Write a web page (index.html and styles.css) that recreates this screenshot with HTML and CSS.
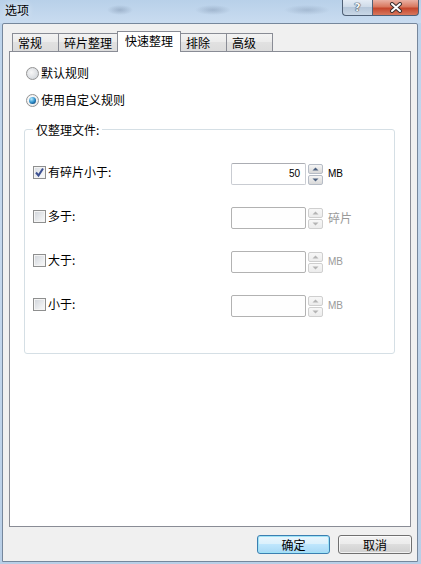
FILE: index.html
```html
<!DOCTYPE html>
<html lang="zh-CN">
<head>
<meta charset="utf-8">
<title>选项</title>
<link rel="stylesheet" href="styles.css">
</head>
<body>
<div class="window">
  <div class="titlebar">
    <span class="title">选项</span>
    <div class="caption-btns">
      <div class="cap help"><span>?</span></div>
      <div class="cap close">
        <svg width="14" height="11" viewBox="0 0 14 11"><path d="M3 2 L11 9 M11 2 L3 9" stroke="#3b3030" stroke-width="4" stroke-linecap="round" fill="none"/><path d="M3 2 L11 9 M11 2 L3 9" stroke="#ffffff" stroke-width="2" stroke-linecap="round" fill="none"/></svg>
      </div>
    </div>
  </div>
  <div class="client">
    <div class="tabs">
      <div class="tab">常规</div>
      <div class="tab">碎片整理</div>
      <div class="tab active">快速整理</div>
      <div class="tab">排除</div>
      <div class="tab">高级</div>
    </div>
    <div class="pane">
      <div class="opt"><span class="radio"></span><span>默认规则</span></div>
      <div class="opt"><span class="radio checked"><span class="dot"></span></span><span>使用自定义规则</span></div>
      <fieldset class="group">
        <legend>仅整理文件:</legend>
        <div class="rule">
          <div class="rule-label"><span class="check checked"><svg width="11" height="11" viewBox="0 0 11 11"><path d="M2 5.5 L4.5 8.5 L9 1.5" stroke="#3d5191" stroke-width="2" fill="none"/></svg></span><span>有碎片小于:</span></div>
          <div class="num">50</div>
          <div class="spin">
            <span class="sb"><svg width="7" height="4" viewBox="0 0 7 4"><path d="M0.5 3.5 L3.5 0.5 L6.5 3.5 Z" fill="#4c607f"/></svg></span>
            <span class="sb"><svg width="7" height="4" viewBox="0 0 7 4"><path d="M0.5 0.5 L3.5 3.5 L6.5 0.5 Z" fill="#4c607f"/></svg></span>
          </div>
          <span class="unit">MB</span>
        </div>
        <div class="rule">
          <div class="rule-label"><span class="check"></span><span>多于:</span></div>
          <div class="num disabled"></div>
          <div class="spin disabled">
            <span class="sb"><svg width="7" height="4" viewBox="0 0 7 4"><path d="M0.5 3.5 L3.5 0.5 L6.5 3.5 Z" fill="#b4b4b4"/></svg></span>
            <span class="sb"><svg width="7" height="4" viewBox="0 0 7 4"><path d="M0.5 0.5 L3.5 3.5 L6.5 0.5 Z" fill="#b4b4b4"/></svg></span>
          </div>
          <span class="unit cjk disabled">碎片</span>
        </div>
        <div class="rule">
          <div class="rule-label"><span class="check"></span><span>大于:</span></div>
          <div class="num disabled"></div>
          <div class="spin disabled">
            <span class="sb"><svg width="7" height="4" viewBox="0 0 7 4"><path d="M0.5 3.5 L3.5 0.5 L6.5 3.5 Z" fill="#b4b4b4"/></svg></span>
            <span class="sb"><svg width="7" height="4" viewBox="0 0 7 4"><path d="M0.5 0.5 L3.5 3.5 L6.5 0.5 Z" fill="#b4b4b4"/></svg></span>
          </div>
          <span class="unit disabled">MB</span>
        </div>
        <div class="rule">
          <div class="rule-label"><span class="check"></span><span>小于:</span></div>
          <div class="num disabled"></div>
          <div class="spin disabled">
            <span class="sb"><svg width="7" height="4" viewBox="0 0 7 4"><path d="M0.5 3.5 L3.5 0.5 L6.5 3.5 Z" fill="#b4b4b4"/></svg></span>
            <span class="sb"><svg width="7" height="4" viewBox="0 0 7 4"><path d="M0.5 0.5 L3.5 3.5 L6.5 0.5 Z" fill="#b4b4b4"/></svg></span>
          </div>
          <span class="unit disabled">MB</span>
        </div>
      </fieldset>
    </div>
    <div class="buttons">
      <button class="btn default">确定</button>
      <button class="btn">取消</button>
    </div>
  </div>
</div>
</body>
</html>
```
FILE: styles.css
```css
html, body {
  margin: 0;
  padding: 0;
}
body {
  width: 421px;
  height: 564px;
  overflow: hidden;
  background: linear-gradient(#bcd3eb, #c6d9ee 40%, #b9cfe7);
  font-family: "Noto Sans CJK SC", "Noto Sans", sans-serif;
  font-size: 12px;
  color: #000;
}
.window {
  height: 564px;
  display: flex;
  flex-direction: column;
}
.titlebar {
  height: 23px;
  flex: none;
  display: flex;
  align-items: flex-start;
  padding-left: 5px;
  background:
    radial-gradient(ellipse 13px 5px at 120px 10px, rgba(70, 90, 120, 0.28), rgba(70, 90, 120, 0)),
    radial-gradient(ellipse 18px 5px at 213px 10px, rgba(70, 90, 120, 0.25), rgba(70, 90, 120, 0)),
    radial-gradient(ellipse 23px 5px at 307px 10px, rgba(70, 90, 120, 0.22), rgba(70, 90, 120, 0)),
    linear-gradient(#b8d0e9, #c9dcf0);
}
.title {
  line-height: 20px;
  text-shadow: 0 0 6px rgba(255, 255, 255, 0.9);
}
.caption-btns {
  margin-left: auto;
  margin-right: 2px;
  display: flex;
}
.cap {
  height: 16px;
  box-sizing: border-box;
  border: 1px solid #4f6076;
  border-top: none;
  display: flex;
  align-items: center;
  justify-content: center;
}
.help {
  width: 30px;
  border-right: none;
  border-radius: 0 0 0 4px;
  background: linear-gradient(#e4ecf5, #ccd9e7 50%, #b6c7da 50%, #c9d7e6);
}
.help span {
  font-family: "DejaVu Sans", sans-serif;
  font-weight: bold;
  font-size: 11px;
  line-height: 14px;
  color: #f4f6f9;
  text-shadow: 0 0 1px #3a4252, 0 0 1px #3a4252, 0 0 1px #3a4252;
}
.close {
  width: 47px;
  border-radius: 0 0 4px 0;
  background: linear-gradient(#eab1a4, #d9785f 45%, #c5462c 55%, #d7775d);
}
.client {
  flex: 1;
  display: flex;
  flex-direction: column;
  margin: 0 3px 2px 2px;
  border: 1px solid #76879c;
  border-radius: 2px 2px 0 0;
  background: #f0f0f0;
  padding: 7px 6px 7px 6px;
}
.tabs {
  height: 20px;
  flex: none;
  display: flex;
  align-items: flex-end;
  padding-left: 3px;
}
.tab {
  height: 18px;
  min-width: 47px;
  box-sizing: border-box;
  border: 1px solid #898c95;
  border-bottom: none;
  margin-right: -1px;
  padding: 0 5px;
  line-height: 17px;
  background: linear-gradient(#f3f3f3, #ebebeb 50%, #e1e1e1 50%, #dcdcdc);
}
.tab.active {
  height: 21px;
  margin-bottom: -1px;
  padding: 0 7px;
  line-height: 18px;
  background: #fff;
  position: relative;
  z-index: 1;
}
.pane {
  flex: 1;
  border: 1px solid #898c95;
  background: #fff;
  padding: 13px 0 0 16px;
  display: flex;
  flex-direction: column;
  align-items: flex-start;
}
.opt {
  display: flex;
  align-items: center;
  height: 16px;
  line-height: 16px;
}
.opt + .opt {
  margin-top: 11px;
}
.radio {
  width: 13px;
  height: 13px;
  box-sizing: border-box;
  border: 1px solid #939393;
  border-radius: 50%;
  margin-right: 2px;
  background: radial-gradient(circle at 40% 40%, #f7f7f7, #dcdfe3 60%, #c9ced4);
  display: flex;
  align-items: center;
  justify-content: center;
}
.radio.checked {
  background: radial-gradient(circle at 40% 40%, #ffffff, #f0f0f0 60%, #d9dde1);
}
.dot {
  width: 7px;
  height: 7px;
  border-radius: 50%;
  background: radial-gradient(circle at 35% 30%, #b9ecff, #3a9ad3 45%, #145b93 75%, #0c3f6e);
}
.group {
  margin: 12px 0 0 -2px;
  width: 371px;
  box-sizing: border-box;
  border: 1px solid #d5dfe5;
  border-radius: 3px;
  padding: 25px 0 36px 8px;
  min-inline-size: 0;
}
.group legend {
  padding: 2px 3px 0 3px;
  line-height: 16px;
}
.rule {
  display: flex;
  align-items: flex-start;
  height: 22px;
}
.rule + .rule {
  margin-top: 22px;
}
.rule-label {
  width: 198px;
  height: 16px;
  margin-top: 1px;
  line-height: 16px;
  display: flex;
  align-items: center;
}
.check {
  width: 13px;
  height: 13px;
  box-sizing: border-box;
  border: 1px solid #8e8f8f;
  margin-right: 2px;
  box-shadow: inset 0 0 0 1px #f4f4f4;
  background: linear-gradient(135deg, #cfd3d9, #eef0f2 70%, #f8f8f8);
  display: flex;
  align-items: center;
  justify-content: center;
}
.check.checked {
  background: linear-gradient(135deg, #d8dce2, #f2f3f5 70%, #fbfbfb);
}
.num {
  width: 75px;
  height: 22px;
  box-sizing: border-box;
  border: 1px solid #c9ccd2;
  border-top-color: #abadb3;
  border-radius: 2px;
  background: #fff;
  text-align: right;
  padding-right: 5px;
  font-family: "Liberation Sans", sans-serif;
  font-size: 10px;
  line-height: 20px;
}
.num.disabled {
  border-color: #b2b2b2;
  background: #fefefe;
}
.spin {
  margin: 1px 0 0 2px;
  width: 15px;
  height: 21px;
  display: flex;
  flex-direction: column;
  gap: 1px;
}
.sb {
  height: 10px;
  box-sizing: border-box;
  border: 1px solid #b6bcc6;
  border-radius: 2px;
  background: linear-gradient(#f5f5f5, #e6e6e6 50%, #d9d9d9);
  display: flex;
  align-items: center;
  justify-content: center;
}
.spin.disabled .sb {
  border-color: #cfcfcf;
  background: linear-gradient(#f7f7f7, #ececec);
}
.unit {
  margin-left: 5px;
  line-height: 22px;
  font-family: "Liberation Sans", sans-serif;
  font-size: 10px;
}
.unit.cjk {
  font-family: "Noto Sans CJK SC", sans-serif;
  font-size: 12px;
}
.unit.disabled {
  color: #9a9a9a;
}
.buttons {
  flex: none;
  display: flex;
  justify-content: flex-end;
  gap: 8px;
  margin-top: 8px;
  margin-right: -1px;
}
.btn {
  height: 19px;
  width: 74px;
  box-sizing: border-box;
  padding: 0;
  margin: 0;
  border: 1px solid #707070;
  border-radius: 3px;
  font-family: "Noto Sans CJK SC", sans-serif;
  font-size: 12px;
  line-height: 16px;
  color: #000;
  background: linear-gradient(#f2f2f2, #ebebeb 50%, #dddddd 50%, #cfcfcf);
  box-shadow: inset 0 0 0 1px rgba(255, 255, 255, 0.7);
}
.btn.default {
  width: 73px;
  border-color: #3c7fb1;
  background: linear-gradient(#eaf6fd, #d9f0fc 50%, #bee6fd 50%, #a7d9f5);
  box-shadow: inset 0 0 0 1px #9ee3f7;
}
```
